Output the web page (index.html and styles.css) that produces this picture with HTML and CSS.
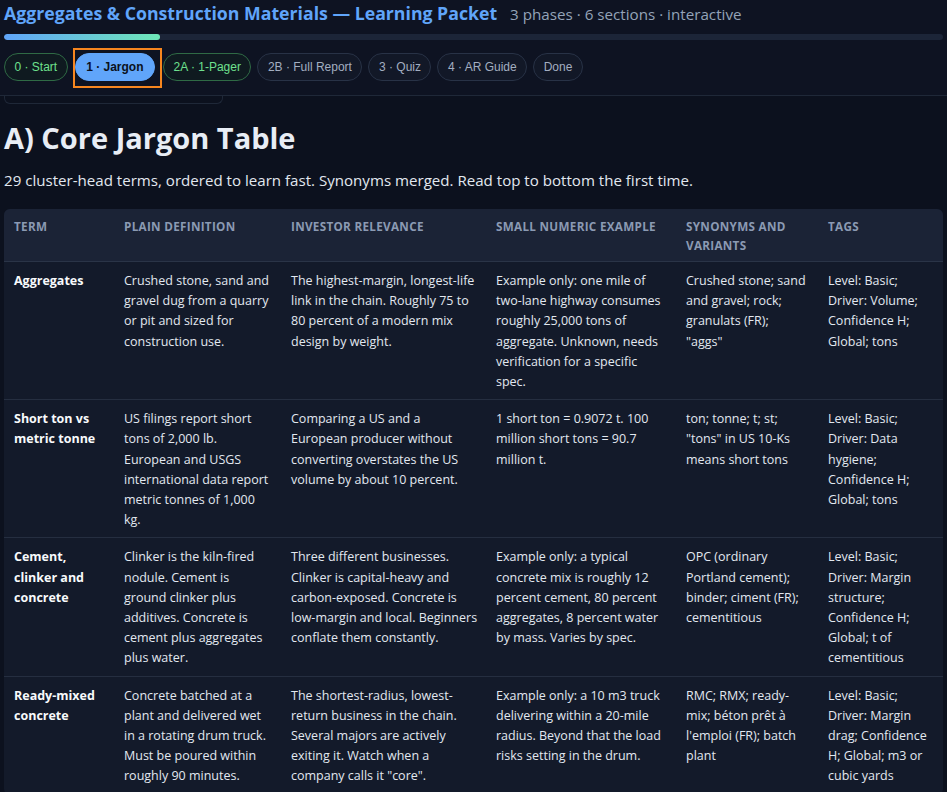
FILE: index.html
```html
<!DOCTYPE html>
<html lang="en">
<head>
    <meta charset="UTF-8">
    <meta name="viewport" content="width=device-width, initial-scale=1.0">
    <title>Aggregates &amp; Construction Materials — Learning Packet</title>
    <link rel="stylesheet" href="styles.css">
</head>
<body>
    <header class="topbar">
        <div class="title-row">
            <h1>Aggregates &amp; Construction Materials — Learning Packet</h1>
            <span class="meta">3 phases · 6 sections · interactive</span>
        </div>
        <div class="progress"><div class="progress-fill" style="width: 16.6%"></div></div>
        <nav class="steps">
            <button class="step done">0 · Start</button>
            <button class="step active">1 · Jargon</button>
            <button class="step done">2A · 1-Pager</button>
            <button class="step">2B · Full Report</button>
            <button class="step">3 · Quiz</button>
            <button class="step">4 · AR Guide</button>
            <button class="step">Done</button>
        </nav>
    </header>

    <main class="content">
        <div class="prev-card"></div>

        <h2>A) Core Jargon Table</h2>
        <p class="lead">29 cluster-head terms, ordered to learn fast. Synonyms merged. Read top to bottom the first time.</p>

        <div class="table-wrap">
            <table class="jargon">
                <thead>
                    <tr>
                        <th class="c-term">Term</th>
                        <th class="c-def">Plain definition</th>
                        <th class="c-rel">Investor relevance</th>
                        <th class="c-num">Small numeric example</th>
                        <th class="c-syn">Synonyms and variants</th>
                        <th class="c-tags">Tags</th>
                    </tr>
                </thead>
                <tbody>
                    <tr>
                        <td class="term">Aggregates</td>
                        <td>Crushed stone, sand and gravel dug from a quarry or pit and sized for construction use.</td>
                        <td>The highest-margin, longest-life link in the chain. Roughly 75 to 80 percent of a modern mix design by weight.</td>
                        <td>Example only: one mile of two-lane highway consumes roughly 25,000 tons of aggregate. Unknown, needs verification for a specific spec.</td>
                        <td>Crushed stone; sand and gravel; rock; granulats (FR); "aggs"</td>
                        <td>Level: Basic; Driver: Volume; Confidence H; Global; tons</td>
                    </tr>
                    <tr>
                        <td class="term">Short ton vs metric tonne</td>
                        <td>US filings report short tons of 2,000 lb. European and USGS international data report metric tonnes of 1,000 kg.</td>
                        <td>Comparing a US and a European producer without converting overstates the US volume by about 10 percent.</td>
                        <td>1 short ton = 0.9072 t. 100 million short tons = 90.7 million t.</td>
                        <td>ton; tonne; t; st; "tons" in US 10-Ks means short tons</td>
                        <td>Level: Basic; Driver: Data hygiene; Confidence H; Global; tons</td>
                    </tr>
                    <tr>
                        <td class="term">Cement, clinker and concrete</td>
                        <td>Clinker is the kiln-fired nodule. Cement is ground clinker plus additives. Concrete is cement plus aggregates plus water.</td>
                        <td>Three different businesses. Clinker is capital-heavy and carbon-exposed. Concrete is low-margin and local. Beginners conflate them constantly.</td>
                        <td>Example only: a typical concrete mix is roughly 12 percent cement, 80 percent aggregates, 8 percent water by mass. Varies by spec.</td>
                        <td>OPC (ordinary Portland cement); binder; ciment (FR); cementitious</td>
                        <td>Level: Basic; Driver: Margin structure; Confidence H; Global; t of cementitious</td>
                    </tr>
                    <tr>
                        <td class="term">Ready-mixed concrete</td>
                        <td>Concrete batched at a plant and delivered wet in a rotating drum truck. Must be poured within roughly 90 minutes.</td>
                        <td>The shortest-radius, lowest-return business in the chain. Several majors are actively exiting it. Watch when a company calls it "core".</td>
                        <td>Example only: a 10 m3 truck delivering within a 20-mile radius. Beyond that the load risks setting in the drum.</td>
                        <td>RMC; RMX; ready-mix; béton prêt à l'emploi (FR); batch plant</td>
                        <td>Level: Basic; Driver: Margin drag; Confidence H; Global; m3 or cubic yards</td>
                    </tr>
                </tbody>
            </table>
        </div>
    </main>
</body>
</html>
```

FILE: styles.css
```css
body {
    margin: 0;
    background-color: #0c111e;
    color: #e2e8f0;
    font-family: "Open Sans", "Noto Sans", sans-serif;
}

.topbar {
    padding: 0 4px 14px;
    background-color: #0e1322;
    border-bottom: 1px solid #1f2838;
}

.title-row {
    display: flex;
    align-items: baseline;
    gap: 13px;
    line-height: 26px;
}

.title-row h1 {
    margin: 0;
    font-size: 17.7px;
    font-weight: 700;
    color: #60a5fa;
}

.meta {
    font-size: 15.2px;
    color: #94a3b8;
}

.progress {
    margin-top: 7px;
    height: 6px;
    border-radius: 3px;
    background-color: #1c2538;
    overflow: hidden;
}

.progress-fill {
    height: 100%;
    border-radius: 3px;
    background: linear-gradient(90deg, #60a5fa, #6ee7b7);
}

.steps {
    display: flex;
    gap: 6px;
    margin-top: 13px;
}

.step {
    padding: 6px 9.5px;
    border: 1px solid #283246;
    border-radius: 999px;
    background-color: #121827;
    color: #a3aec0;
    font-family: "Liberation Sans", Arial, sans-serif;
    font-size: 12px;
    line-height: 14px;
}

.step.done {
    border-color: #2f6a45;
    color: #6ee08e;
    background-color: #0f1a20;
}

.step.active {
    position: relative;
    margin: 0 2px 0 1px;
    padding: 6px 10.5px;
    border-color: #60a5fa;
    background-color: #60a5fa;
    color: #0b1120;
    font-weight: 700;
}

.step.active::after {
    content: "";
    position: absolute;
    left: -3px;
    top: -6px;
    right: -8px;
    bottom: -8px;
    border: 2px solid #f7861f;
}

.content {
    padding: 0 4px;
}

.prev-card {
    width: 217px;
    height: 7px;
    border: 1px solid #1f2838;
    border-top: none;
    border-radius: 0 0 6px 6px;
}

.content h2 {
    margin: 14px 0 0;
    font-size: 29px;
    font-weight: 700;
    color: #e8edf5;
}

.lead {
    margin: 13px 0 19px;
    font-size: 15.1px;
}

.table-wrap {
    border-radius: 6px;
    overflow: hidden;
    background-color: #131a2a;
}

.jargon {
    width: 100%;
    border-collapse: collapse;
    font-size: 12.5px;
    line-height: 20.2px;
}

.jargon th {
    padding: 8px 10px 6px;
    background-color: #1b2336;
    color: #8b9ab3;
    font-size: 11.7px;
    font-weight: 700;
    letter-spacing: 0.3px;
    text-transform: uppercase;
    text-align: left;
    vertical-align: top;
    line-height: 19px;
    border-bottom: 1px solid #2a3447;
}

.jargon td {
    padding: 9px 10px 7px;
    vertical-align: top;
    border-bottom: 1px solid #252e40;
}

.jargon th:nth-child(3),
.jargon td:nth-child(3) {
    padding-right: 6px;
}

.jargon .term {
    font-weight: 700;
    color: #f8fafc;
}

.c-term { width: 90px; }
.c-def { width: 147px; }
.c-rel { width: 189px; }
.c-num { width: 170px; }
.c-syn { width: 122px; }
```
